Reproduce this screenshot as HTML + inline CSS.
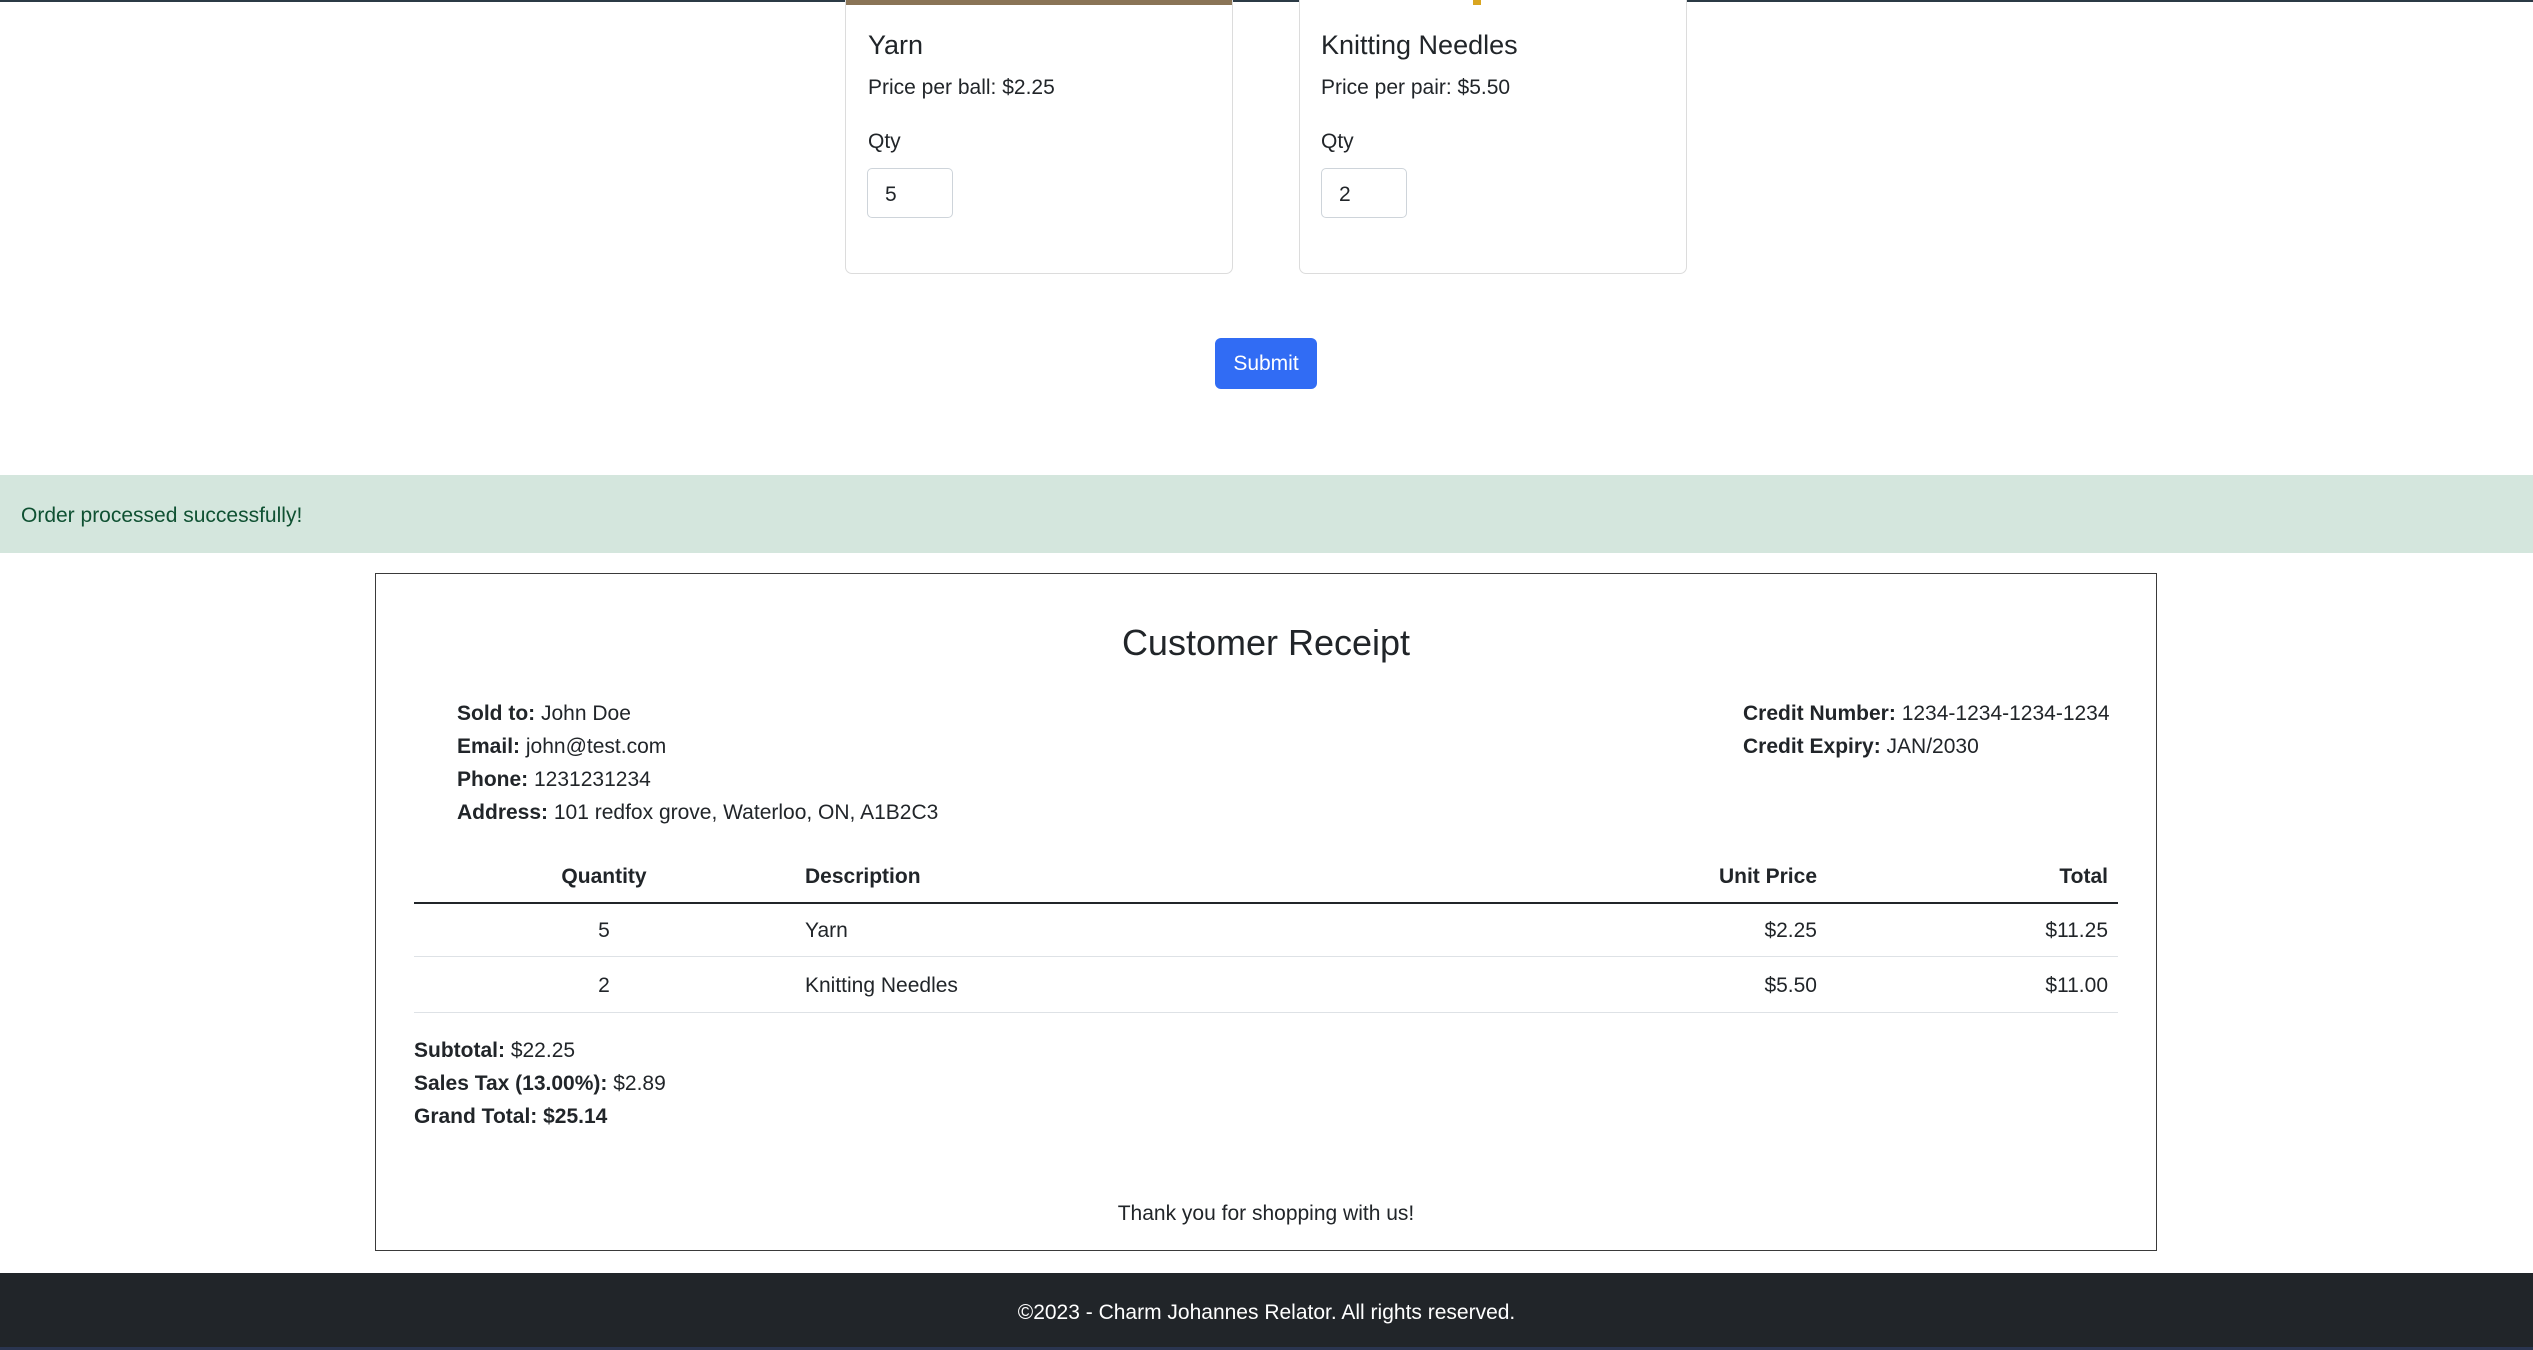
<!DOCTYPE html>
<html><head><meta charset="utf-8">
<style>
*{box-sizing:border-box;margin:0;padding:0}
body{width:2533px;height:1350px;position:relative;overflow:hidden;background:#fff;font-family:"Liberation Sans",sans-serif;font-size:21px;color:#212529}
.a{position:absolute;white-space:nowrap;line-height:1}
.card{position:absolute;top:0;width:388px;height:274px;border:1px solid #dcdcdc;border-top:none;border-radius:0 0 7px 7px}
.inp{position:absolute;top:168px;width:86px;height:50px;border:1px solid #ced4da;border-radius:5px;font-size:21px;padding:14px 0 0 17px}
b{font-weight:bold}
.hl{position:absolute;left:414px;width:1704px;height:1px}
</style></head><body>
<div style="position:absolute;left:0;top:0;width:2533px;height:2px;background:#2b3a45"></div>

<div class="card" style="left:845px"><div style="height:5px;background:#8a7456"></div></div>
<div class="card" style="left:1299px"><div style="height:5px;background:#fff;position:relative"><div style="position:absolute;left:173px;width:8px;height:5px;background:#d9a520"></div></div></div>

<div class="a" style="left:868px;top:32px;font-size:27px">Yarn</div>
<div class="a" style="left:868px;top:77px">Price per ball: $2.25</div>
<div class="a" style="left:868px;top:131px">Qty</div>
<div class="inp" style="left:867px">5</div>

<div class="a" style="left:1321px;top:32px;font-size:27px">Knitting Needles</div>
<div class="a" style="left:1321px;top:77px">Price per pair: $5.50</div>
<div class="a" style="left:1321px;top:131px">Qty</div>
<div class="inp" style="left:1321px">2</div>

<div style="position:absolute;left:1215px;top:338px;width:102px;height:51px;background:#316cf4;border-radius:6px;color:#fff;font-size:21px;text-align:center;line-height:51px">Submit</div>

<div style="position:absolute;left:0;top:475px;width:2533px;height:78px;background:#d4e6dd"></div>
<div class="a" style="left:21px;top:505px;color:#0f5132">Order processed successfully!</div>

<div style="position:absolute;left:375px;top:573px;width:1782px;height:678px;border:1.5px solid #3a3a3a"></div>
<div class="a" style="left:375px;width:1782px;text-align:center;top:625px;font-size:36px">Customer Receipt</div>

<div class="a" style="left:457px;top:703px"><b>Sold to:</b> John Doe</div>
<div class="a" style="left:457px;top:736px"><b>Email:</b> john@test.com</div>
<div class="a" style="left:457px;top:769px"><b>Phone:</b> 1231231234</div>
<div class="a" style="left:457px;top:802px"><b>Address:</b> 101 redfox grove, Waterloo, ON, A1B2C3</div>

<div class="a" style="left:1743px;top:703px"><b>Credit Number:</b> 1234-1234-1234-1234</div>
<div class="a" style="left:1743px;top:736px"><b>Credit Expiry:</b> JAN/2030</div>

<div class="a" style="left:414px;width:380px;text-align:center;top:866px"><b>Quantity</b></div>
<div class="a" style="left:805px;top:866px"><b>Description</b></div>
<div class="a" style="right:716px;top:866px"><b>Unit Price</b></div>
<div class="a" style="right:425px;top:866px"><b>Total</b></div>
<div class="hl" style="top:902px;height:2px;background:#212529"></div>

<div class="a" style="left:414px;width:380px;text-align:center;top:920px">5</div>
<div class="a" style="left:805px;top:920px">Yarn</div>
<div class="a" style="right:716px;top:920px">$2.25</div>
<div class="a" style="right:425px;top:920px">$11.25</div>
<div class="hl" style="top:956px;background:#dee2e6"></div>

<div class="a" style="left:414px;width:380px;text-align:center;top:975px">2</div>
<div class="a" style="left:805px;top:975px">Knitting Needles</div>
<div class="a" style="right:716px;top:975px">$5.50</div>
<div class="a" style="right:425px;top:975px">$11.00</div>
<div class="hl" style="top:1012px;background:#dee2e6"></div>

<div class="a" style="left:414px;top:1040px"><b>Subtotal:</b> $22.25</div>
<div class="a" style="left:414px;top:1073px"><b>Sales Tax (13.00%):</b> $2.89</div>
<div class="a" style="left:414px;top:1106px"><b>Grand Total: $25.14</b></div>

<div class="a" style="left:375px;width:1782px;text-align:center;top:1203px">Thank you for shopping with us!</div>

<div style="position:absolute;left:0;top:1273px;width:2533px;height:77px;background:#212529"></div>
<div class="a" style="left:0;width:2533px;text-align:center;top:1302px;color:#fff">©2023 - Charm Johannes Relator. All rights reserved.</div>
<div style="position:absolute;left:0;top:1347px;width:2533px;height:3px;background:#2a3550"></div>
</body></html>
